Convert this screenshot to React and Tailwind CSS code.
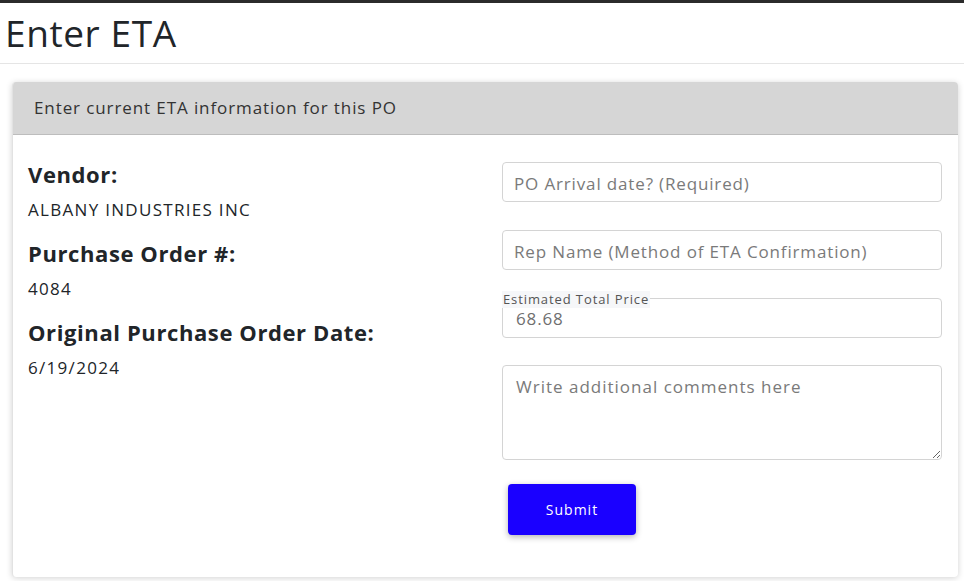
import React, { useState } from "react";

function InfoRow({ label, value }) {
  return (
    <div>
      <h5 className="text-[22px] font-bold leading-[30px] tracking-[0.6px] text-[#212529]">{label}</h5>
      <p className="text-[17px] leading-[24px] mt-[9px] tracking-[1.3px] text-[#212529]">{value}</p>
    </div>
  );
}

export default function App() {
  const [arrival, setArrival] = useState("");
  const [rep, setRep] = useState("");
  const [price, setPrice] = useState("68.68");
  const [comments, setComments] = useState("");

  const inputClass =
    "w-full h-[40px] px-[11px] border border-[#d4d4d4] rounded-[4px] text-[17px] tracking-[0.85px] text-[#6f6f6f] placeholder:text-[#7a7a7a] bg-white focus:outline-none";

  return (
    <div
      className="min-h-screen bg-white border-t-[3px] border-[#2b2b2b]"
      style={{ fontFamily: '"Open Sans", "Liberation Sans", sans-serif' }}
    >
      <h1 className="px-[5px] h-[61px] flex items-center text-[37px] font-normal text-[#212529] border-b border-[#e5e5e5] tracking-[0.6px]">
        Enter ETA
      </h1>

      <div className="pl-3 pt-[18px]">
        <div className="w-[946px] h-[495px] bg-white rounded-[4px] shadow-[0_1px_6px_rgba(0,0,0,0.18)] border-l border-[#e2e2e2] overflow-hidden">
          <div className="h-[53px] bg-[#d6d6d6] border-b border-[#bdbdbd] flex items-center px-[21px] text-[17px] tracking-[0.9px] text-[#333]">
            Enter current ETA information for this PO
          </div>

          <div className="flex">
            <div className="w-[489px] pl-[15px] pt-[24px] flex flex-col gap-[16px]">
              <InfoRow label="Vendor:" value="ALBANY INDUSTRIES INC" />
              <InfoRow label="Purchase Order #:" value="4084" />
              <InfoRow label="Original Purchase Order Date:" value="6/19/2024" />
            </div>

            <form
              className="w-[440px] pt-[27px] flex flex-col"
              onSubmit={(e) => e.preventDefault()}
            >
              <input
                className={`${inputClass} pt-[3px]`}
                placeholder="PO Arrival date? (Required)"
                value={arrival}
                onChange={(e) => setArrival(e.target.value)}
              />
              <input
                className={`${inputClass} pt-[3px] mt-[28px]`}
                placeholder="Rep Name (Method of ETA Confirmation)"
                value={rep}
                onChange={(e) => setRep(e.target.value)}
              />
              <div className="relative mt-[28px]">
                <label className="absolute left-0 -top-[7px] px-[1px] bg-[#f6f7f9] text-[13px] leading-[17px] tracking-[0.9px] text-[#555]">
                  Estimated Total Price
                </label>
                <input
                  className={`${inputClass} px-[13px]`}
                  value={price}
                  onChange={(e) => setPrice(e.target.value)}
                />
              </div>
              <textarea
                className="mt-[27px] w-full h-[95px] px-[13px] py-[8px] border border-[#d4d4d4] rounded-[4px] text-[17px] tracking-[1px] text-[#6f6f6f] placeholder:text-[#7a7a7a] focus:outline-none"
                placeholder="Write additional comments here"
                value={comments}
                onChange={(e) => setComments(e.target.value)}
              />
              <div className="pl-[6px] mt-[24px]">
                <button
                  type="submit"
                  className="w-[128px] h-[51px] bg-[#1a00ff] text-white text-[14px] tracking-[1px] rounded-[4px] shadow-[0_2px_6px_rgba(0,0,0,0.3)]"
                >
                  Submit
                </button>
              </div>
            </form>
          </div>
        </div>
      </div>
    </div>
  );
}
